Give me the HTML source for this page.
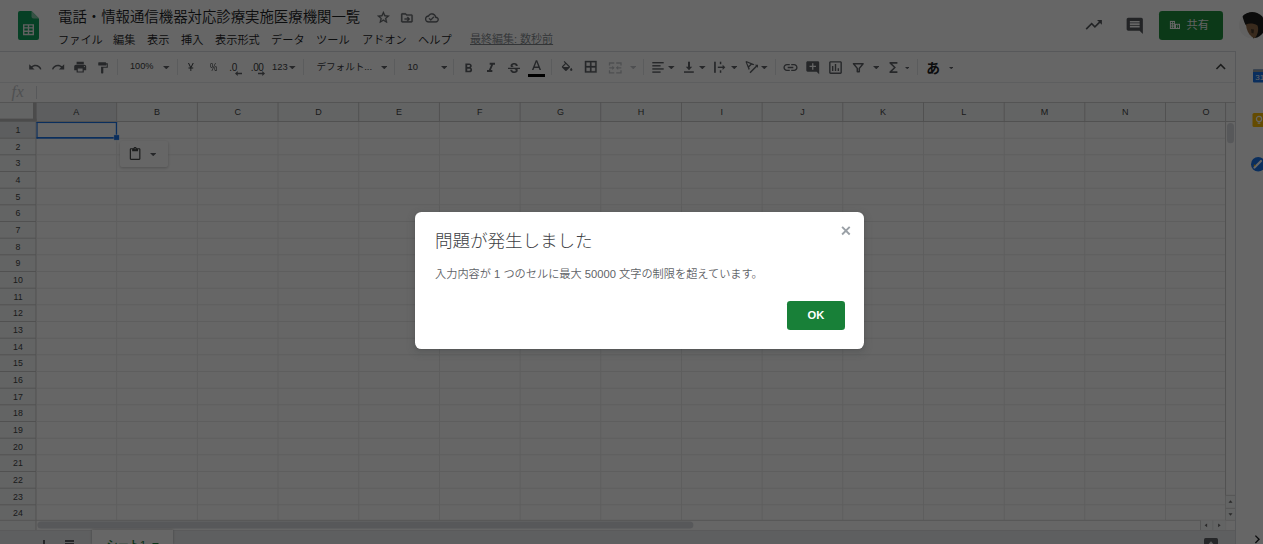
<!DOCTYPE html>
<html lang="ja"><head><meta charset="utf-8"><title>電話・情報通信機器対応診療実施医療機関一覧</title>
<style>
html,body{margin:0;padding:0;}
body{width:1263px;height:544px;overflow:hidden;background:#fff;position:relative;font-family:"Liberation Sans", "Noto Sans CJK JP", sans-serif;}
.ab{position:absolute;}
.ic{position:absolute;display:block;}
.tx{position:absolute;white-space:nowrap;line-height:1;}
#app{position:absolute;left:0;top:0;width:1263px;height:544px;overflow:hidden;background:#fff;}
#dim{position:absolute;left:0;top:0;width:1263px;height:544px;background:rgba(0,0,0,0.6);}
#dlg{position:absolute;left:415px;top:212px;width:449px;height:137px;background:#fff;border-radius:6.4px;box-shadow:0 3.200px 6.400px 2.400px rgba(60,64,67,0.15),0 1px 2.400px rgba(60,64,67,0.3);}
</style></head><body><div id="app">
<svg class="ic" style="left:18px;top:11px;width:21px;height:29px" viewBox="0 0 21 29">
<path fill="#11a05c" d="M2 0h11.500L21 7.500V27a2 2 0 0 1-2 2H2a2 2 0 0 1-2-2V2a2 2 0 0 1 2-2z"/>
<path fill="#87ceac" d="M13.500 0L21 7.500h-5.500a2 2 0 0 1-2-2z"/>
<path fill="#f1f1f1" d="M5 13.200v11h11v-11H5zm4.800 9.600H6.400v-1.900h3.400v1.900zm0-3.300H6.400v-1.900h3.400v1.900zm0-3.300H6.400v-1.600h3.400v1.600zm4.800 6.600h-3.400v-1.900h3.400v1.900zm0-3.300h-3.400v-1.900h3.400v1.900zm0-3.300h-3.400v-1.600h3.400v1.600z"/>
</svg>
<div class="tx " style="left:58px;top:10px;font-size:14.4px;color:#202124;font-weight:350;">電話・情報通信機器対応診療実施医療機関一覧</div>
<svg class="ic" style="left:376.40px;top:10.20px;width:14.8px;height:14.8px" viewBox="0 0 24 24"><path fill="#5f6368" d="M22 9.240l-7.190-.620L12 2 9.190 8.630 2 9.240l5.460 4.730L5.820 21 12 17.270 18.180 21l-1.630-7.030L22 9.240zM12 15.400l-3.760 2.270 1-4.280-3.320-2.880 4.380-.380L12 6.100l1.710 4.040 4.380.380-3.320 2.880 1 4.280L12 15.400z" stroke="#5f6368" stroke-width="0.5"/></svg>
<svg class="ic" style="left:400.40px;top:10.80px;width:13.8px;height:13.8px" viewBox="0 0 24 24"><path fill="#5f6368" d="M20 6h-8l-2-2H4c-1.100 0-2 .900-2 2v12c0 1.100.900 2 2 2h16c1.100 0 2-.900 2-2V8c0-1.100-.900-2-2-2zm0 12H4V6h5.170l2 2H20v10zm-7.840-1.590 1.420 1.420L17.410 14l-3.830-3.830-1.420 1.420L13.580 13H8v2h5.580z" stroke="#5f6368" stroke-width="0.5"/></svg>
<svg class="ic" style="left:424.80px;top:10.80px;width:13.8px;height:13.8px" viewBox="0 0 24 24"><path fill="#5f6368" d="M19.350 10.040C18.670 6.590 15.640 4 12 4 9.110 4 6.600 5.640 5.350 8.040 2.340 8.360 0 10.910 0 14c0 3.310 2.690 6 6 6h13c2.760 0 5-2.240 5-5 0-2.640-2.050-4.780-4.650-4.960zM19 18H6c-2.210 0-4-1.790-4-4 0-2.050 1.530-3.760 3.560-3.970l1.070-.110.500-.950C8.080 7.140 9.940 6 12 6c2.620 0 4.880 1.860 5.390 4.430l.300 1.500 1.530.110c1.560.100 2.780 1.410 2.780 2.960 0 1.650-1.350 3-3 3zm-9-3.820l-2.090-2.090L6.500 13.500 10 17l6.010-6.010-1.410-1.410z" stroke="#5f6368" stroke-width="0.4"/></svg>
<div class="tx " style="left:58px;top:34.6px;font-size:11.2px;color:#202124;font-weight:350;">ファイル</div>
<div class="tx " style="left:113px;top:34.6px;font-size:11.2px;color:#202124;font-weight:350;">編集</div>
<div class="tx " style="left:147px;top:34.6px;font-size:11.2px;color:#202124;font-weight:350;">表示</div>
<div class="tx " style="left:181px;top:34.6px;font-size:11.2px;color:#202124;font-weight:350;">挿入</div>
<div class="tx " style="left:215px;top:34.6px;font-size:11.2px;color:#202124;font-weight:350;">表示形式</div>
<div class="tx " style="left:271px;top:34.6px;font-size:11.2px;color:#202124;font-weight:350;">データ</div>
<div class="tx " style="left:316px;top:34.6px;font-size:11.2px;color:#202124;font-weight:350;">ツール</div>
<div class="tx " style="left:362px;top:34.6px;font-size:11.2px;color:#202124;font-weight:350;">アドオン</div>
<div class="tx " style="left:418px;top:34.6px;font-size:11.2px;color:#202124;font-weight:350;">ヘルプ</div>
<div class="tx " style="left:470px;top:34.3px;font-size:11px;color:#80868b;font-weight:350;text-decoration:underline;text-underline-offset:0.5px;">最終編集: 数秒前</div>
<svg class="ic" style="left:1084.45px;top:15.25px;width:19.5px;height:19.5px" viewBox="0 0 24 24"><path fill="#55595e" d="M16 6l2.290 2.290-4.880 4.880-4-4L2 16.590 3.410 18l6-6 4 4 6.300-6.290L22 12V6z"/></svg>
<svg class="ic" style="left:1124.75px;top:15.55px;width:19.5px;height:19.5px" viewBox="0 0 24 24"><path fill="#55595e" d="M21.990 4c0-1.100-.890-2-1.990-2H4c-1.100 0-2 .900-2 2v12c0 1.100.900 2 2 2h14l4 4-.010-18zM18 14H6v-2h12v2zm0-3H6V9h12v2zm0-3H6V6h12v2z"/></svg>
<div class="ab" style="left:1159px;top:11px;width:64px;height:29px;background:#1e8e3e;border-radius:3.200px"></div>
<svg class="ic" style="left:1169px;top:20px;width:12px;height:10px" viewBox="1169 20 12 10"><g fill="#fff"><rect x="1169.900" y="20.900" width="5.100" height="8.100"/><rect x="1175" y="23.800" width="5" height="5.200"/></g><g fill="#1e8e3e"><rect x="1170.900" y="22" width="1.200" height="1.200"/><rect x="1172.900" y="22" width="1.200" height="1.200"/><rect x="1170.900" y="24.300" width="1.200" height="1.200"/><rect x="1172.900" y="24.300" width="1.200" height="1.200"/><rect x="1170.900" y="26.600" width="1.200" height="1.200"/><rect x="1172.900" y="26.600" width="1.200" height="1.200"/><rect x="1176" y="24.800" width="3" height="3.200"/></g><g fill="#fff"><rect x="1177" y="25.400" width="1.100" height="0.900"/><rect x="1177" y="26.900" width="1.100" height="0.900"/></g></svg>
<div class="tx " style="left:1186.6px;top:19.9px;font-size:11.2px;color:#f1f3f4;font-weight:400;">共有</div>
<svg class="ic" style="left:1238.800px;top:12.400px;width:26.400px;height:26.400px" viewBox="0 0 26.400 26.400">
<defs><clipPath id="av"><circle cx="13.200" cy="13.200" r="13.200"/></clipPath>
<filter id="bl" x="-10%" y="-10%" width="120%" height="120%"><feGaussianBlur stdDeviation="0.600"/></filter></defs>
<g clip-path="url(#av)"><rect width="26.400" height="26.400" fill="#f4f4f4"/>
<g filter="url(#bl)">
<path fill="#1c1b1a" d="M3.500 4C8 -3 31 -3 31 14L31 30L14 30L14 20L6.500 12.800C5 9.500 4 6.500 3.500 4z"/>
<path fill="#8f6a48" d="M7 12.500C10 11 15 11.300 18.500 13.500C20 17.500 19 22.500 15.500 26.600L12.500 24.500C9.500 22 7.300 18 7 12.500z"/>
<path fill="#4a3a2c" d="M12 17l3 .5-.5 4-2-.5z"/>
</g></g></svg>
<div class="ab" style="left:0;top:51px;width:1236px;height:1px;background:#dadce0"></div>
<svg class="ic" style="left:27.80px;top:60.30px;width:14.4px;height:14.4px" viewBox="0 0 24 24"><path fill="#5f6368" d="M12.5 8c-2.65 0-5.05.99-6.9 2.6L2 7v9h9l-3.62-3.62c1.39-1.16 3.16-1.88 5.12-1.88 3.54 0 6.55 2.31 7.6 5.5l2.37-.78C21.08 11.03 17.15 8 12.5 8z"/></svg>
<svg class="ic" style="left:51.10px;top:60.30px;width:14.4px;height:14.4px" viewBox="0 0 24 24"><path fill="#5f6368" d="M18.4 10.6C16.55 8.99 14.15 8 11.5 8c-4.65 0-8.58 3.03-9.96 7.22L3.9 16c1.05-3.19 4.05-5.5 7.6-5.5 1.95 0 3.73.72 5.12 1.88L13 16h9V7l-3.6 3.6z"/></svg>
<svg class="ic" style="left:72.80px;top:60.30px;width:14.4px;height:14.4px" viewBox="0 0 24 24"><path fill="#5f6368" d="M19 8H5c-1.66 0-3 1.34-3 3v6h4v4h12v-4h4v-6c0-1.66-1.34-3-3-3zm-3 11H8v-5h8v5zm3-7c-.55 0-1-.45-1-1s.45-1 1-1 1 .45 1 1-.45 1-1 1zm-1-9H6v4h12V3z"/></svg>
<svg class="ic" style="left:95.75px;top:60.75px;width:13.5px;height:13.5px" viewBox="0 0 24 24"><path fill="#5f6368" d="M18 4V3c0-.55-.45-1-1-1H5c-.55 0-1 .45-1 1v4c0 .55.45 1 1 1h12c.55 0 1-.45 1-1V6h1v4H9v11c0 .55.45 1 1 1h2c.55 0 1-.45 1-1v-9h8V4h-3z"/></svg>
<div class="ab" style="left:117px;top:59px;width:1px;height:16px;background:#e3e5e8"></div>
<div class="tx " style="left:130px;top:62px;font-size:9.2px;color:#3c4043;font-weight:400;">100%</div>
<svg class="ic" style="left:163.20px;top:65.85px;width:6.6px;height:3.3px" viewBox="0 0 10 5"><path fill="#5f6368" d="M0 0h10L5 5z"/></svg>
<div class="ab" style="left:177px;top:59px;width:1px;height:16px;background:#e3e5e8"></div>
<div class="tx " style="left:187.8px;top:61.6px;font-size:11.4px;color:#3c4043;font-weight:400;transform:scaleX(0.9);transform-origin:left top;">¥</div>
<div class="tx " style="left:209.8px;top:62.3px;font-size:10.8px;color:#3c4043;font-weight:400;transform:scaleX(0.76);transform-origin:left top;">%</div>
<div class="tx " style="left:229.2px;top:62.5px;font-size:10px;color:#3c4043;font-weight:400;letter-spacing:-0.2px;">.0</div>
<svg class="ic" style="left:235px;top:71px;width:7px;height:5px" viewBox="0 0 7 5"><path fill="#5f6368" d="M0 2.500L2.700 0v1.800h4.300v1.400H2.700v1.800z"/></svg>
<div class="tx " style="left:250.8px;top:62.5px;font-size:10px;color:#3c4043;font-weight:400;letter-spacing:-0.4px;">.00</div>
<svg class="ic" style="left:258px;top:71px;width:7px;height:5px" viewBox="0 0 7 5"><path fill="#5f6368" d="M7 2.500L4.300 0v1.800H0v1.400h4.300v1.800z"/></svg>
<div class="tx " style="left:272px;top:62px;font-size:9.4px;color:#3c4043;font-weight:400;">123</div>
<svg class="ic" style="left:289.20px;top:65.85px;width:6.6px;height:3.3px" viewBox="0 0 10 5"><path fill="#5f6368" d="M0 0h10L5 5z"/></svg>
<div class="ab" style="left:303px;top:59px;width:1px;height:16px;background:#e3e5e8"></div>
<div class="tx " style="left:316.5px;top:62px;font-size:9.6px;color:#3c4043;font-weight:400;letter-spacing:-0.05px;">デフォルト...</div>
<svg class="ic" style="left:380.70px;top:65.85px;width:6.6px;height:3.3px" viewBox="0 0 10 5"><path fill="#5f6368" d="M0 0h10L5 5z"/></svg>
<div class="ab" style="left:394px;top:59px;width:1px;height:16px;background:#e3e5e8"></div>
<div class="tx " style="left:407.5px;top:62px;font-size:9.4px;color:#3c4043;font-weight:400;">10</div>
<svg class="ic" style="left:440.70px;top:65.85px;width:6.6px;height:3.3px" viewBox="0 0 10 5"><path fill="#5f6368" d="M0 0h10L5 5z"/></svg>
<div class="ab" style="left:453px;top:59px;width:1px;height:16px;background:#e3e5e8"></div>
<svg class="ic" style="left:461.00px;top:60.80px;width:15px;height:15px" viewBox="0 0 24 24"><path fill="#5f6368" d="M15.6 10.79c.97-.67 1.65-1.77 1.65-2.79 0-2.26-1.75-4-4-4H7v14h7.04c2.09 0 3.71-1.7 3.71-3.79 0-1.52-.86-2.82-2.15-3.42zM10 6.5h3c.83 0 1.5.67 1.5 1.5s-.67 1.5-1.5 1.5h-3v-3zm3.5 9H10v-3h3.5c.83 0 1.5.67 1.5 1.5s-.67 1.5-1.5 1.5z"/></svg>
<svg class="ic" style="left:483.00px;top:60.30px;width:16px;height:16px" viewBox="0 0 24 24"><path fill="#5f6368" d="M10 4v3h2.21l-3.42 8H6v3h8v-3h-2.21l3.42-8H18V4z"/></svg>
<svg class="ic" style="left:505.50px;top:60.50px;width:16px;height:16px" viewBox="0 0 24 24"><path fill="#5f6368" d="M7.24 8.75c-.26-.48-.39-1.03-.39-1.67 0-.61.13-1.16.4-1.67.26-.5.63-.93 1.11-1.29.48-.35 1.05-.63 1.7-.83.66-.19 1.39-.29 2.18-.29.81 0 1.54.11 2.21.34.66.22 1.23.54 1.69.94.47.4.83.88 1.08 1.43.25.55.38 1.15.38 1.81h-3.01c0-.31-.05-.59-.15-.85-.09-.27-.24-.49-.44-.68-.2-.19-.45-.33-.75-.44-.3-.1-.66-.16-1.06-.16-.39 0-.74.04-1.03.13-.29.09-.53.21-.72.36-.19.16-.34.34-.44.55-.1.21-.15.43-.15.66 0 .48.25.88.74 1.21.38.25.77.48 1.41.7H7.39c-.05-.08-.11-.17-.15-.25zM21 12v-2H3v2h9.62c.18.07.4.14.55.2.37.17.66.34.87.51.21.17.35.36.43.57.07.2.11.43.11.69 0 .23-.05.45-.14.66-.09.2-.23.38-.42.53-.19.15-.42.26-.71.35-.29.08-.63.13-1.01.13-.43 0-.83-.04-1.18-.13s-.66-.23-.91-.42c-.25-.19-.45-.44-.59-.75-.14-.31-.25-.76-.25-1.21H6.4c0 .55.08 1.13.24 1.58.16.45.37.85.65 1.21.28.35.6.66.98.92.37.26.78.48 1.22.65.44.17.9.3 1.38.39.48.08.96.13 1.44.13.8 0 1.53-.09 2.18-.28s1.21-.45 1.67-.79c.46-.34.82-.77 1.07-1.27s.38-1.07.38-1.71c0-.6-.1-1.14-.31-1.61-.05-.11-.11-.23-.17-.33H21z"/></svg>
<svg class="ic" style="left:527.50px;top:58.30px;width:17px;height:17px" viewBox="0 0 24 24"><path fill="#5f6368" d="M11 3L5.5 17h2.25l1.12-3h6.25l1.12 3h2.25L13 3h-2zm-1.38 9L12 5.67 14.38 12H9.62z"/></svg>
<div class="ab" style="left:528px;top:74px;width:17px;height:3px;background:#000"></div>
<div class="ab" style="left:551px;top:59px;width:1px;height:16px;background:#e3e5e8"></div>
<svg class="ic" style="left:560.20px;top:60.70px;width:14.2px;height:14.2px" viewBox="0 0 24 24"><path fill="#5f6368" d="M16.56 8.94L7.62 0 6.21 1.41l2.38 2.38-5.15 5.15c-.59.59-.59 1.54 0 2.12l5.5 5.5c.29.29.68.44 1.06.44s.77-.15 1.06-.44l5.5-5.5c.59-.58.59-1.53 0-2.12zM5.21 10L10 5.21 14.79 10H5.21zM19 11.5s-2 2.17-2 3.5c0 1.1.9 2 2 2s2-.9 2-2c0-1.33-2-3.5-2-3.5z"/></svg>
<svg class="ic" style="left:583.45px;top:59.05px;width:15.5px;height:15.5px" viewBox="0 0 24 24"><path fill="#5f6368" d="M3 3v18h18V3H3zm8 16H5v-6h6v6zm0-8H5V5h6v6zm8 8h-6v-6h6v6zm0-8h-6V5h6v6z" stroke="#5f6368" stroke-width="0.5"/></svg>
<svg class="ic" style="left:607px;top:60px;width:17px;height:16px" viewBox="607 60 17 16"><g fill="none" stroke="#c3c6ca" stroke-width="1.300"><path d="M609.500 65.500v-2.500h4.800M616.200 63h4.800v2.500M609.500 70.300v2.500h4.800M616.200 72.800h4.800v-2.500"/><path d="M609.200 67.800h4.600M616.700 67.800h4.600" stroke-width="1.200"/></g><path fill="#c3c6ca" d="M612.300 65.700l2.300 2.100-2.300 2.100zM618.200 65.700l-2.300 2.100 2.300 2.100z"/></svg>
<svg class="ic" style="left:629.90px;top:66.05px;width:6.6px;height:3.3px" viewBox="0 0 10 5"><path fill="#c3c6ca" d="M0 0h10L5 5z"/></svg>
<div class="ab" style="left:643px;top:59px;width:1px;height:16px;background:#e3e5e8"></div>
<svg class="ic" style="left:651px;top:60px;width:14px;height:15px" viewBox="651 60 14 15"><g fill="#5f6368"><rect x="652.300" y="62" width="11.400" height="1.400"/><rect x="652.300" y="65.100" width="8.300" height="1.400"/><rect x="652.300" y="68.250" width="11.400" height="1.400"/><rect x="652.300" y="71.400" width="8.300" height="1.400"/></g></svg>
<svg class="ic" style="left:668.10px;top:66.15px;width:6.6px;height:3.3px" viewBox="0 0 10 5"><path fill="#5f6368" d="M0 0h10L5 5z"/></svg>
<svg class="ic" style="left:683px;top:60px;width:12px;height:15px" viewBox="683 60 12 15"><g fill="#5f6368"><rect x="688" y="61.700" width="2" height="6"/><path d="M685.800 66.700h6.400l-3.200 3.500z"/><rect x="684" y="71.300" width="9.800" height="1.500"/></g></svg>
<svg class="ic" style="left:699.20px;top:66.15px;width:6.6px;height:3.3px" viewBox="0 0 10 5"><path fill="#5f6368" d="M0 0h10L5 5z"/></svg>
<svg class="ic" style="left:713px;top:60px;width:14px;height:15px" viewBox="713 60 14 15"><g fill="#5f6368"><rect x="714.100" y="61.700" width="1.700" height="11.100"/><rect x="719.800" y="61.700" width="1.500" height="2.500"/><rect x="719.800" y="70.300" width="1.500" height="2.500"/><rect x="717.800" y="66.600" width="5.600" height="1.400"/><path d="M722.600 64.700l2.700 2.600-2.700 2.600z"/></g></svg>
<svg class="ic" style="left:730.70px;top:66.15px;width:6.6px;height:3.3px" viewBox="0 0 10 5"><path fill="#5f6368" d="M0 0h10L5 5z"/></svg>
<svg class="ic" style="left:742.85px;top:57.95px;width:17.5px;height:17.5px" viewBox="0 0 24 24"><path fill="#5f6368" d="M4.49 4.21L3.43 5.27 7.85 16.4l1.48-1.48-.92-2.19 3.54-3.54 2.19.92 1.48-1.48L4.49 4.210zm3.090 6.800L5.360 6.140l4.870 2.230-2.650 2.640zm12.990-1.680h-4.240l1.410 1.410-8.840 8.840L10.320 21l8.840-8.840 1.410 1.410V9.330z"/></svg>
<svg class="ic" style="left:761.40px;top:66.15px;width:6.6px;height:3.3px" viewBox="0 0 10 5"><path fill="#5f6368" d="M0 0h10L5 5z"/></svg>
<div class="ab" style="left:775px;top:59px;width:1px;height:16px;background:#e3e5e8"></div>
<svg class="ic" style="left:781.70px;top:59.00px;width:17px;height:17px" viewBox="0 0 24 24"><path fill="#5f6368" d="M3.9 12c0-1.71 1.39-3.1 3.1-3.1h4V7H7c-2.76 0-5 2.24-5 5s2.24 5 5 5h4v-1.9H7c-1.71 0-3.1-1.39-3.1-3.1zM8 13h8v-2H8v2zm9-6h-4v1.9h4c1.71 0 3.1 1.39 3.1 3.1s-1.39 3.1-3.1 3.1h-4V17h4c2.76 0 5-2.24 5-5s-2.24-5-5-5z"/></svg>
<svg class="ic" style="left:805.25px;top:60.25px;width:15.5px;height:15.5px" viewBox="0 0 24 24"><path fill="#5f6368" d="M21.99 4c0-1.1-.89-2-1.990-2H4c-1.100 0-2 .900-2 2v12c0 1.100.900 2 2 2h14l4 4-.010-18zM17 11h-4v4h-2v-4H7V9h4V5h2v4h4v2z"/></svg>
<svg class="ic" style="left:826.80px;top:59.00px;width:17px;height:17px" viewBox="0 0 24 24"><path fill="#5f6368" d="M9 17H7v-7h2v7zm4 0h-2V7h2v10zm4 0h-2v-4h2v4zm2 2H5V5h14v14zm0-16H5c-1.100 0-2 .900-2 2v14c0 1.100.900 2 2 2h14c1.100 0 2-.900 2-2V5c0-1.100-.900-2-2-2z"/></svg>
<svg class="ic" style="left:851px;top:60px;width:15px;height:15px" viewBox="851 60 15 15"><path fill="none" stroke="#5f6368" stroke-width="1.500" stroke-linejoin="round" d="M853.500 63.700h9.600l-3.800 4.700v3.400h-2v-3.400z"/></svg>
<svg class="ic" style="left:872.70px;top:65.85px;width:6.6px;height:3.3px" viewBox="0 0 10 5"><path fill="#5f6368" d="M0 0h10L5 5z"/></svg>
<svg class="ic" style="left:885.00px;top:58.70px;width:17px;height:17px" viewBox="0 0 24 24"><path fill="#5f6368" d="M17.500 4.300H6.400v1.900l6.100 5.800-6.100 5.800v1.900h11.100v-2.300h-7.500l5.400-5.400-5.400-5.400h7.500z"/></svg>
<svg class="ic" style="left:904.95px;top:66.58px;width:4.5px;height:2.25px" viewBox="0 0 10 5"><path fill="#5f6368" d="M0 0h10L5 5z"/></svg>
<div class="ab" style="left:917px;top:59px;width:1px;height:16px;background:#e3e5e8"></div>
<div class="tx " style="left:926.3px;top:62.3px;font-size:13.8px;color:#202124;font-weight:700;">あ</div>
<svg class="ic" style="left:948.75px;top:66.67px;width:4.5px;height:2.25px" viewBox="0 0 10 5"><path fill="#5f6368" d="M0 0h10L5 5z"/></svg>
<svg class="ic" style="left:1210.85px;top:56.75px;width:19.5px;height:19.5px" viewBox="0 0 24 24"><path fill="#444746" d="M12 8l-6 6 1.410 1.410L12 10.830l4.590 4.580L18 14z"/></svg>
<div class="ab" style="left:0;top:82px;width:1236px;height:1px;background:#e8eaed"></div>
<div class="tx" style="left:11.500px;top:83.500px;font-size:16.500px;color:#c4c7cb;font-style:italic;letter-spacing:0.5px;font-family:'Liberation Serif',serif">fx</div>
<div class="ab" style="left:36px;top:86px;width:1px;height:13px;background:#dadce0"></div>
<svg class="ic" style="left:0;top:102px;width:1226px;height:419px" viewBox="0 102 1226 419">
<rect x="0" y="102" width="1226" height="419" fill="#fff"/>
<rect x="0" y="102" width="1225.5" height="19.5" fill="#f8f9fa"/>
<rect x="0" y="102" width="36.0" height="418.29999999999995" fill="#f8f9fa"/>
<rect x="36.0" y="102" width="80.68" height="19.5" fill="#e8eaed"/>
<rect x="0" y="121.5" width="36.0" height="16.667" fill="#e8eaed"/>
<rect x="33" y="102" width="3.600" height="19.500" fill="#bcbcbc"/>
<rect x="0" y="118.600" width="36.600" height="3" fill="#bcbcbc"/>
<rect x="0" y="101.85" width="1225.5" height="0.9" fill="#c6c6c6"/>
<rect x="35.55" y="121.5" width="0.9" height="398.80" fill="#c6c6c6"/>
<rect x="116.23" y="102" width="0.9" height="19.5" fill="#c6c6c6"/>
<rect x="116.23" y="121.5" width="0.9" height="398.80" fill="#e9e9e9"/>
<rect x="196.91" y="102" width="0.9" height="19.5" fill="#c6c6c6"/>
<rect x="196.91" y="121.5" width="0.9" height="398.80" fill="#e9e9e9"/>
<rect x="277.59" y="102" width="0.9" height="19.5" fill="#c6c6c6"/>
<rect x="277.59" y="121.5" width="0.9" height="398.80" fill="#e9e9e9"/>
<rect x="358.27" y="102" width="0.9" height="19.5" fill="#c6c6c6"/>
<rect x="358.27" y="121.5" width="0.9" height="398.80" fill="#e9e9e9"/>
<rect x="438.95" y="102" width="0.9" height="19.5" fill="#c6c6c6"/>
<rect x="438.95" y="121.5" width="0.9" height="398.80" fill="#e9e9e9"/>
<rect x="519.63" y="102" width="0.9" height="19.5" fill="#c6c6c6"/>
<rect x="519.63" y="121.5" width="0.9" height="398.80" fill="#e9e9e9"/>
<rect x="600.31" y="102" width="0.9" height="19.5" fill="#c6c6c6"/>
<rect x="600.31" y="121.5" width="0.9" height="398.80" fill="#e9e9e9"/>
<rect x="680.99" y="102" width="0.9" height="19.5" fill="#c6c6c6"/>
<rect x="680.99" y="121.5" width="0.9" height="398.80" fill="#e9e9e9"/>
<rect x="761.67" y="102" width="0.9" height="19.5" fill="#c6c6c6"/>
<rect x="761.67" y="121.5" width="0.9" height="398.80" fill="#e9e9e9"/>
<rect x="842.35" y="102" width="0.9" height="19.5" fill="#c6c6c6"/>
<rect x="842.35" y="121.5" width="0.9" height="398.80" fill="#e9e9e9"/>
<rect x="923.03" y="102" width="0.9" height="19.5" fill="#c6c6c6"/>
<rect x="923.03" y="121.5" width="0.9" height="398.80" fill="#e9e9e9"/>
<rect x="1003.71" y="102" width="0.9" height="19.5" fill="#c6c6c6"/>
<rect x="1003.71" y="121.5" width="0.9" height="398.80" fill="#e9e9e9"/>
<rect x="1084.39" y="102" width="0.9" height="19.5" fill="#c6c6c6"/>
<rect x="1084.39" y="121.5" width="0.9" height="398.80" fill="#e9e9e9"/>
<rect x="1165.07" y="102" width="0.9" height="19.5" fill="#c6c6c6"/>
<rect x="1165.07" y="121.5" width="0.9" height="398.80" fill="#e9e9e9"/>
<rect x="0" y="121.05" width="36.0" height="0.9" fill="#c6c6c6"/>
<rect x="36.0" y="121.05" width="1189.5" height="0.9" fill="#c6c6c6"/>
<rect x="0" y="137.72" width="36.0" height="0.9" fill="#c6c6c6"/>
<rect x="36.0" y="137.72" width="1189.5" height="0.9" fill="#e9e9e9"/>
<rect x="0" y="154.38" width="36.0" height="0.9" fill="#c6c6c6"/>
<rect x="36.0" y="154.38" width="1189.5" height="0.9" fill="#e9e9e9"/>
<rect x="0" y="171.05" width="36.0" height="0.9" fill="#c6c6c6"/>
<rect x="36.0" y="171.05" width="1189.5" height="0.9" fill="#e9e9e9"/>
<rect x="0" y="187.72" width="36.0" height="0.9" fill="#c6c6c6"/>
<rect x="36.0" y="187.72" width="1189.5" height="0.9" fill="#e9e9e9"/>
<rect x="0" y="204.39" width="36.0" height="0.9" fill="#c6c6c6"/>
<rect x="36.0" y="204.39" width="1189.5" height="0.9" fill="#e9e9e9"/>
<rect x="0" y="221.05" width="36.0" height="0.9" fill="#c6c6c6"/>
<rect x="36.0" y="221.05" width="1189.5" height="0.9" fill="#e9e9e9"/>
<rect x="0" y="237.72" width="36.0" height="0.9" fill="#c6c6c6"/>
<rect x="36.0" y="237.72" width="1189.5" height="0.9" fill="#e9e9e9"/>
<rect x="0" y="254.39" width="36.0" height="0.9" fill="#c6c6c6"/>
<rect x="36.0" y="254.39" width="1189.5" height="0.9" fill="#e9e9e9"/>
<rect x="0" y="271.05" width="36.0" height="0.9" fill="#c6c6c6"/>
<rect x="36.0" y="271.05" width="1189.5" height="0.9" fill="#e9e9e9"/>
<rect x="0" y="287.72" width="36.0" height="0.9" fill="#c6c6c6"/>
<rect x="36.0" y="287.72" width="1189.5" height="0.9" fill="#e9e9e9"/>
<rect x="0" y="304.39" width="36.0" height="0.9" fill="#c6c6c6"/>
<rect x="36.0" y="304.39" width="1189.5" height="0.9" fill="#e9e9e9"/>
<rect x="0" y="321.05" width="36.0" height="0.9" fill="#c6c6c6"/>
<rect x="36.0" y="321.05" width="1189.5" height="0.9" fill="#e9e9e9"/>
<rect x="0" y="337.72" width="36.0" height="0.9" fill="#c6c6c6"/>
<rect x="36.0" y="337.72" width="1189.5" height="0.9" fill="#e9e9e9"/>
<rect x="0" y="354.39" width="36.0" height="0.9" fill="#c6c6c6"/>
<rect x="36.0" y="354.39" width="1189.5" height="0.9" fill="#e9e9e9"/>
<rect x="0" y="371.06" width="36.0" height="0.9" fill="#c6c6c6"/>
<rect x="36.0" y="371.06" width="1189.5" height="0.9" fill="#e9e9e9"/>
<rect x="0" y="387.72" width="36.0" height="0.9" fill="#c6c6c6"/>
<rect x="36.0" y="387.72" width="1189.5" height="0.9" fill="#e9e9e9"/>
<rect x="0" y="404.39" width="36.0" height="0.9" fill="#c6c6c6"/>
<rect x="36.0" y="404.39" width="1189.5" height="0.9" fill="#e9e9e9"/>
<rect x="0" y="421.06" width="36.0" height="0.9" fill="#c6c6c6"/>
<rect x="36.0" y="421.06" width="1189.5" height="0.9" fill="#e9e9e9"/>
<rect x="0" y="437.72" width="36.0" height="0.9" fill="#c6c6c6"/>
<rect x="36.0" y="437.72" width="1189.5" height="0.9" fill="#e9e9e9"/>
<rect x="0" y="454.39" width="36.0" height="0.9" fill="#c6c6c6"/>
<rect x="36.0" y="454.39" width="1189.5" height="0.9" fill="#e9e9e9"/>
<rect x="0" y="471.06" width="36.0" height="0.9" fill="#c6c6c6"/>
<rect x="36.0" y="471.06" width="1189.5" height="0.9" fill="#e9e9e9"/>
<rect x="0" y="487.72" width="36.0" height="0.9" fill="#c6c6c6"/>
<rect x="36.0" y="487.72" width="1189.5" height="0.9" fill="#e9e9e9"/>
<rect x="0" y="504.39" width="36.0" height="0.9" fill="#c6c6c6"/>
<rect x="36.0" y="504.39" width="1189.5" height="0.9" fill="#e9e9e9"/>
<g fill="#1a73e8"><rect x="36.500" y="122" width="80.600" height="1.050"/><rect x="36.500" y="122" width="1.100" height="16.700"/><rect x="115.800" y="122" width="1.300" height="16.700"/><rect x="36.500" y="137" width="80.600" height="1.700"/></g>
<rect x="113.900" y="134.900" width="5.300" height="5.200" fill="#1a73e8" stroke="#fff" stroke-width="0.400"/>
</svg>
<div class="ab" style="left:0;top:102px;width:1225px;height:418px;overflow:hidden">
<div class="tx" style="left:56.3px;top:6px;width:40px;text-align:center;font-size:9px;color:#444746">A</div>
<div class="tx" style="left:137.0px;top:6px;width:40px;text-align:center;font-size:9px;color:#444746">B</div>
<div class="tx" style="left:217.7px;top:6px;width:40px;text-align:center;font-size:9px;color:#444746">C</div>
<div class="tx" style="left:298.4px;top:6px;width:40px;text-align:center;font-size:9px;color:#444746">D</div>
<div class="tx" style="left:379.1px;top:6px;width:40px;text-align:center;font-size:9px;color:#444746">E</div>
<div class="tx" style="left:459.7px;top:6px;width:40px;text-align:center;font-size:9px;color:#444746">F</div>
<div class="tx" style="left:540.4px;top:6px;width:40px;text-align:center;font-size:9px;color:#444746">G</div>
<div class="tx" style="left:621.1px;top:6px;width:40px;text-align:center;font-size:9px;color:#444746">H</div>
<div class="tx" style="left:701.8px;top:6px;width:40px;text-align:center;font-size:9px;color:#444746">I</div>
<div class="tx" style="left:782.5px;top:6px;width:40px;text-align:center;font-size:9px;color:#444746">J</div>
<div class="tx" style="left:863.1px;top:6px;width:40px;text-align:center;font-size:9px;color:#444746">K</div>
<div class="tx" style="left:943.8px;top:6px;width:40px;text-align:center;font-size:9px;color:#444746">L</div>
<div class="tx" style="left:1024.5px;top:6px;width:40px;text-align:center;font-size:9px;color:#444746">M</div>
<div class="tx" style="left:1105.2px;top:6px;width:40px;text-align:center;font-size:9px;color:#444746">N</div>
<div class="tx" style="left:1185.9px;top:6px;width:40px;text-align:center;font-size:9px;color:#444746">O</div>
<div class="tx" style="left:0;top:23.9px;width:36px;text-align:center;font-size:8.800px;color:#444746">1</div>
<div class="tx" style="left:0;top:40.6px;width:36px;text-align:center;font-size:8.800px;color:#444746">2</div>
<div class="tx" style="left:0;top:57.2px;width:36px;text-align:center;font-size:8.800px;color:#444746">3</div>
<div class="tx" style="left:0;top:73.9px;width:36px;text-align:center;font-size:8.800px;color:#444746">4</div>
<div class="tx" style="left:0;top:90.6px;width:36px;text-align:center;font-size:8.800px;color:#444746">5</div>
<div class="tx" style="left:0;top:107.2px;width:36px;text-align:center;font-size:8.800px;color:#444746">6</div>
<div class="tx" style="left:0;top:123.9px;width:36px;text-align:center;font-size:8.800px;color:#444746">7</div>
<div class="tx" style="left:0;top:140.6px;width:36px;text-align:center;font-size:8.800px;color:#444746">8</div>
<div class="tx" style="left:0;top:157.2px;width:36px;text-align:center;font-size:8.800px;color:#444746">9</div>
<div class="tx" style="left:0;top:173.9px;width:36px;text-align:center;font-size:8.800px;color:#444746">10</div>
<div class="tx" style="left:0;top:190.6px;width:36px;text-align:center;font-size:8.800px;color:#444746">11</div>
<div class="tx" style="left:0;top:207.2px;width:36px;text-align:center;font-size:8.800px;color:#444746">12</div>
<div class="tx" style="left:0;top:223.9px;width:36px;text-align:center;font-size:8.800px;color:#444746">13</div>
<div class="tx" style="left:0;top:240.6px;width:36px;text-align:center;font-size:8.800px;color:#444746">14</div>
<div class="tx" style="left:0;top:257.2px;width:36px;text-align:center;font-size:8.800px;color:#444746">15</div>
<div class="tx" style="left:0;top:273.9px;width:36px;text-align:center;font-size:8.800px;color:#444746">16</div>
<div class="tx" style="left:0;top:290.6px;width:36px;text-align:center;font-size:8.800px;color:#444746">17</div>
<div class="tx" style="left:0;top:307.2px;width:36px;text-align:center;font-size:8.800px;color:#444746">18</div>
<div class="tx" style="left:0;top:323.9px;width:36px;text-align:center;font-size:8.800px;color:#444746">19</div>
<div class="tx" style="left:0;top:340.6px;width:36px;text-align:center;font-size:8.800px;color:#444746">20</div>
<div class="tx" style="left:0;top:357.2px;width:36px;text-align:center;font-size:8.800px;color:#444746">21</div>
<div class="tx" style="left:0;top:373.9px;width:36px;text-align:center;font-size:8.800px;color:#444746">22</div>
<div class="tx" style="left:0;top:390.6px;width:36px;text-align:center;font-size:8.800px;color:#444746">23</div>
<div class="tx" style="left:0;top:407.2px;width:36px;text-align:center;font-size:8.800px;color:#444746">24</div>
</div>
<div class="ab" style="left:120px;top:140.500px;width:48px;height:26px;background:#fff;border-radius:2px;box-shadow:0 1px 3px rgba(0,0,0,0.22)"></div>
<svg class="ic" style="left:127.90px;top:146.90px;width:14.2px;height:14.2px" viewBox="0 0 24 24"><path fill="#444746" d="M19 2h-4.180C14.400.840 13.300 0 12 0c-1.300 0-2.400.840-2.820 2H5c-1.100 0-2 .900-2 2v16c0 1.100.900 2 2 2h14c1.100 0 2-.900 2-2V4c0-1.100-.900-2-2-2zm-7 0c.550 0 1 .450 1 1s-.450 1-1 1-1-.450-1-1 .450-1 1-1zm7 18H5V4h2v3h10V4h2v16z"/></svg>
<svg class="ic" style="left:150.00px;top:153.10px;width:6.4px;height:3.2px" viewBox="0 0 10 5"><path fill="#5f6368" d="M0 0h10L5 5z"/></svg>
<svg class="ic" style="left:1220px;top:102px;width:16px;height:429px" viewBox="1220 102 16 429">
<rect x="1225.600" y="102" width="9.700" height="428" fill="#fff"/>
<rect x="1225.600" y="102.300" width="9.700" height="19.200" fill="#f8f9fa"/>
<rect x="1225.150" y="102" width="0.900" height="428" fill="#c6c6c6"/>
<rect x="1225.600" y="101.850" width="9.700" height="0.900" fill="#c6c6c6"/>
<rect x="1225.600" y="121.050" width="9.700" height="0.900" fill="#c6c6c6"/>
<rect x="1227" y="123" width="7" height="20.300" rx="3.500" fill="#dadce0"/>
<rect x="1225.600" y="495.300" width="9.700" height="25" fill="#f8f9fa"/>
<rect x="1225.600" y="494.850" width="9.700" height="0.900" fill="#d0d0d0"/>
<rect x="1225.600" y="507.850" width="9.700" height="0.900" fill="#d0d0d0"/>
<rect x="1225.600" y="519.850" width="9.700" height="0.900" fill="#dcdcdc"/>
<path d="M1228.500 502.700h4l-2-2.500z" fill="#666"/>
<path d="M1228.500 513.300h4l-2 2.500z" fill="#666"/>
</svg>
<svg class="ic" style="left:0;top:518px;width:1226px;height:13px" viewBox="0 518 1226 13">
<rect x="0" y="520.300" width="1225.600" height="9.700" fill="#fff"/>
<rect x="0" y="520.300" width="36" height="9.700" fill="#f8f9fa"/>
<rect x="35.550" y="520" width="0.900" height="10" fill="#c6c6c6"/>
<rect x="0" y="519.850" width="1225.600" height="0.900" fill="#cfcfcf"/>
<rect x="37.400" y="521.400" width="656" height="7.200" rx="3.600" fill="#dadce0"/>
<rect x="1200.500" y="520.300" width="25" height="9.700" fill="#f8f9fa"/>
<rect x="1200.050" y="520.300" width="0.900" height="9.700" fill="#d0d0d0"/>
<rect x="1212.400" y="520.300" width="0.900" height="9.700" fill="#e0e0e0"/>
<path d="M1207.100 523.400v3.800l-2.500-1.900z" fill="#666"/>
<path d="M1218.100 523.400v3.800l2.500-1.900z" fill="#666"/>
</svg>
<div class="ab" style="left:0;top:530px;width:1235px;height:14px;background:#eceef0;border-top:1px solid #e0e2e4;box-sizing:border-box"></div>
<div class="ab" style="left:92px;top:530px;width:80.500px;height:14px;background:#fff;box-shadow:0 0 2.500px rgba(0,0,0,0.3)"></div>
<div class="ab" style="left:43.300px;top:540.300px;width:1.800px;height:4px;background:#5f6368"></div>
<div class="ab" style="left:64.500px;top:540.300px;width:9.600px;height:1.400px;background:#5f6368"></div>
<div class="ab" style="left:64.500px;top:542.800px;width:9.600px;height:1.400px;background:#5f6368"></div>
<div class="tx " style="left:106.5px;top:539.6px;font-size:11.2px;color:#188038;font-weight:500;">シート1</div>
<svg class="ic" style="left:152.10px;top:542.85px;width:7px;height:3.5px" viewBox="0 0 10 5"><path fill="#188038" d="M0 0h10L5 5z"/></svg>
<div class="ab" style="left:1204px;top:538px;width:14.200px;height:10px;background:#5f6368;border-radius:1.500px"></div>
<svg class="ic" style="left:1208px;top:541px;width:6px;height:4px" viewBox="0 0 8 5"><path fill="#e8eaed" d="M0 5h8L4 0z"/></svg>
<div class="ab" style="left:1235px;top:52px;width:1px;height:492px;background:#dadce0"></div>
<svg class="ic" style="left:1252.500px;top:68.700px;width:14px;height:14px" viewBox="0 0 14 14"><rect x="0" y="0.500" width="14" height="13" rx="1" fill="#1a73e8"/><rect x="0" y="0.500" width="14" height="2.500" fill="#9aa0a6"/><text x="2.200" y="11" font-size="8" font-family="Liberation Sans, sans-serif" fill="#fff">31</text></svg>
<svg class="ic" style="left:1251.500px;top:113px;width:14px;height:14px" viewBox="0 0 14 14"><rect x="0.500" y="0" width="12" height="14" rx="1.500" fill="#fbbc04"/><circle cx="7" cy="6" r="2.600" fill="none" stroke="#fff" stroke-width="1.200"/><rect x="5.700" y="9.500" width="2.600" height="1.300" fill="#fff"/></svg>
<svg class="ic" style="left:1251px;top:157px;width:14.500px;height:14.500px" viewBox="0 0 14.500 14.500"><circle cx="7.250" cy="7.250" r="7.250" fill="#1a73e8"/><path d="M3.500 10.500L10 4" stroke="#fff" stroke-width="2.200" stroke-linecap="round"/><circle cx="3.600" cy="8.300" r="0.900" fill="#fbbc04"/></svg>
<svg class="ic" style="left:1249.05px;top:530.55px;width:16.5px;height:16.5px" viewBox="0 0 24 24"><path fill="#202124" d="M10 6L8.590 7.410 13.170 12l-4.580 4.590L10 18l6-6z"/></svg>
</div>
<div id="dim"></div>
<div id="dlg">
<div class="tx" style="left:20px;top:21.400px;font-size:17.600px;color:#3c4043;font-weight:300;letter-spacing:-0.100px">問題が発生しました</div>
<div class="tx" style="left:20px;top:57.200px;font-size:11.200px;color:#5f6368;font-weight:350;">入力内容が 1 つのセルに最大 50000 文字の制限を超えています。</div>
<svg class="ic" style="left:425px;top:13px;width:12px;height:12px" viewBox="0 0 12 12"><path d="M2.100 1.900l7.600 7.600M9.700 1.900l-7.600 7.600" stroke="#9aa0a6" stroke-width="1.900" fill="none"/></svg>
<div class="ab" style="left:372px;top:89px;width:58px;height:29px;background:#188038;border-radius:3.200px;color:#fff;font-weight:700;font-size:11.200px;line-height:29px;text-align:center">OK</div>
</div>
</body></html>
